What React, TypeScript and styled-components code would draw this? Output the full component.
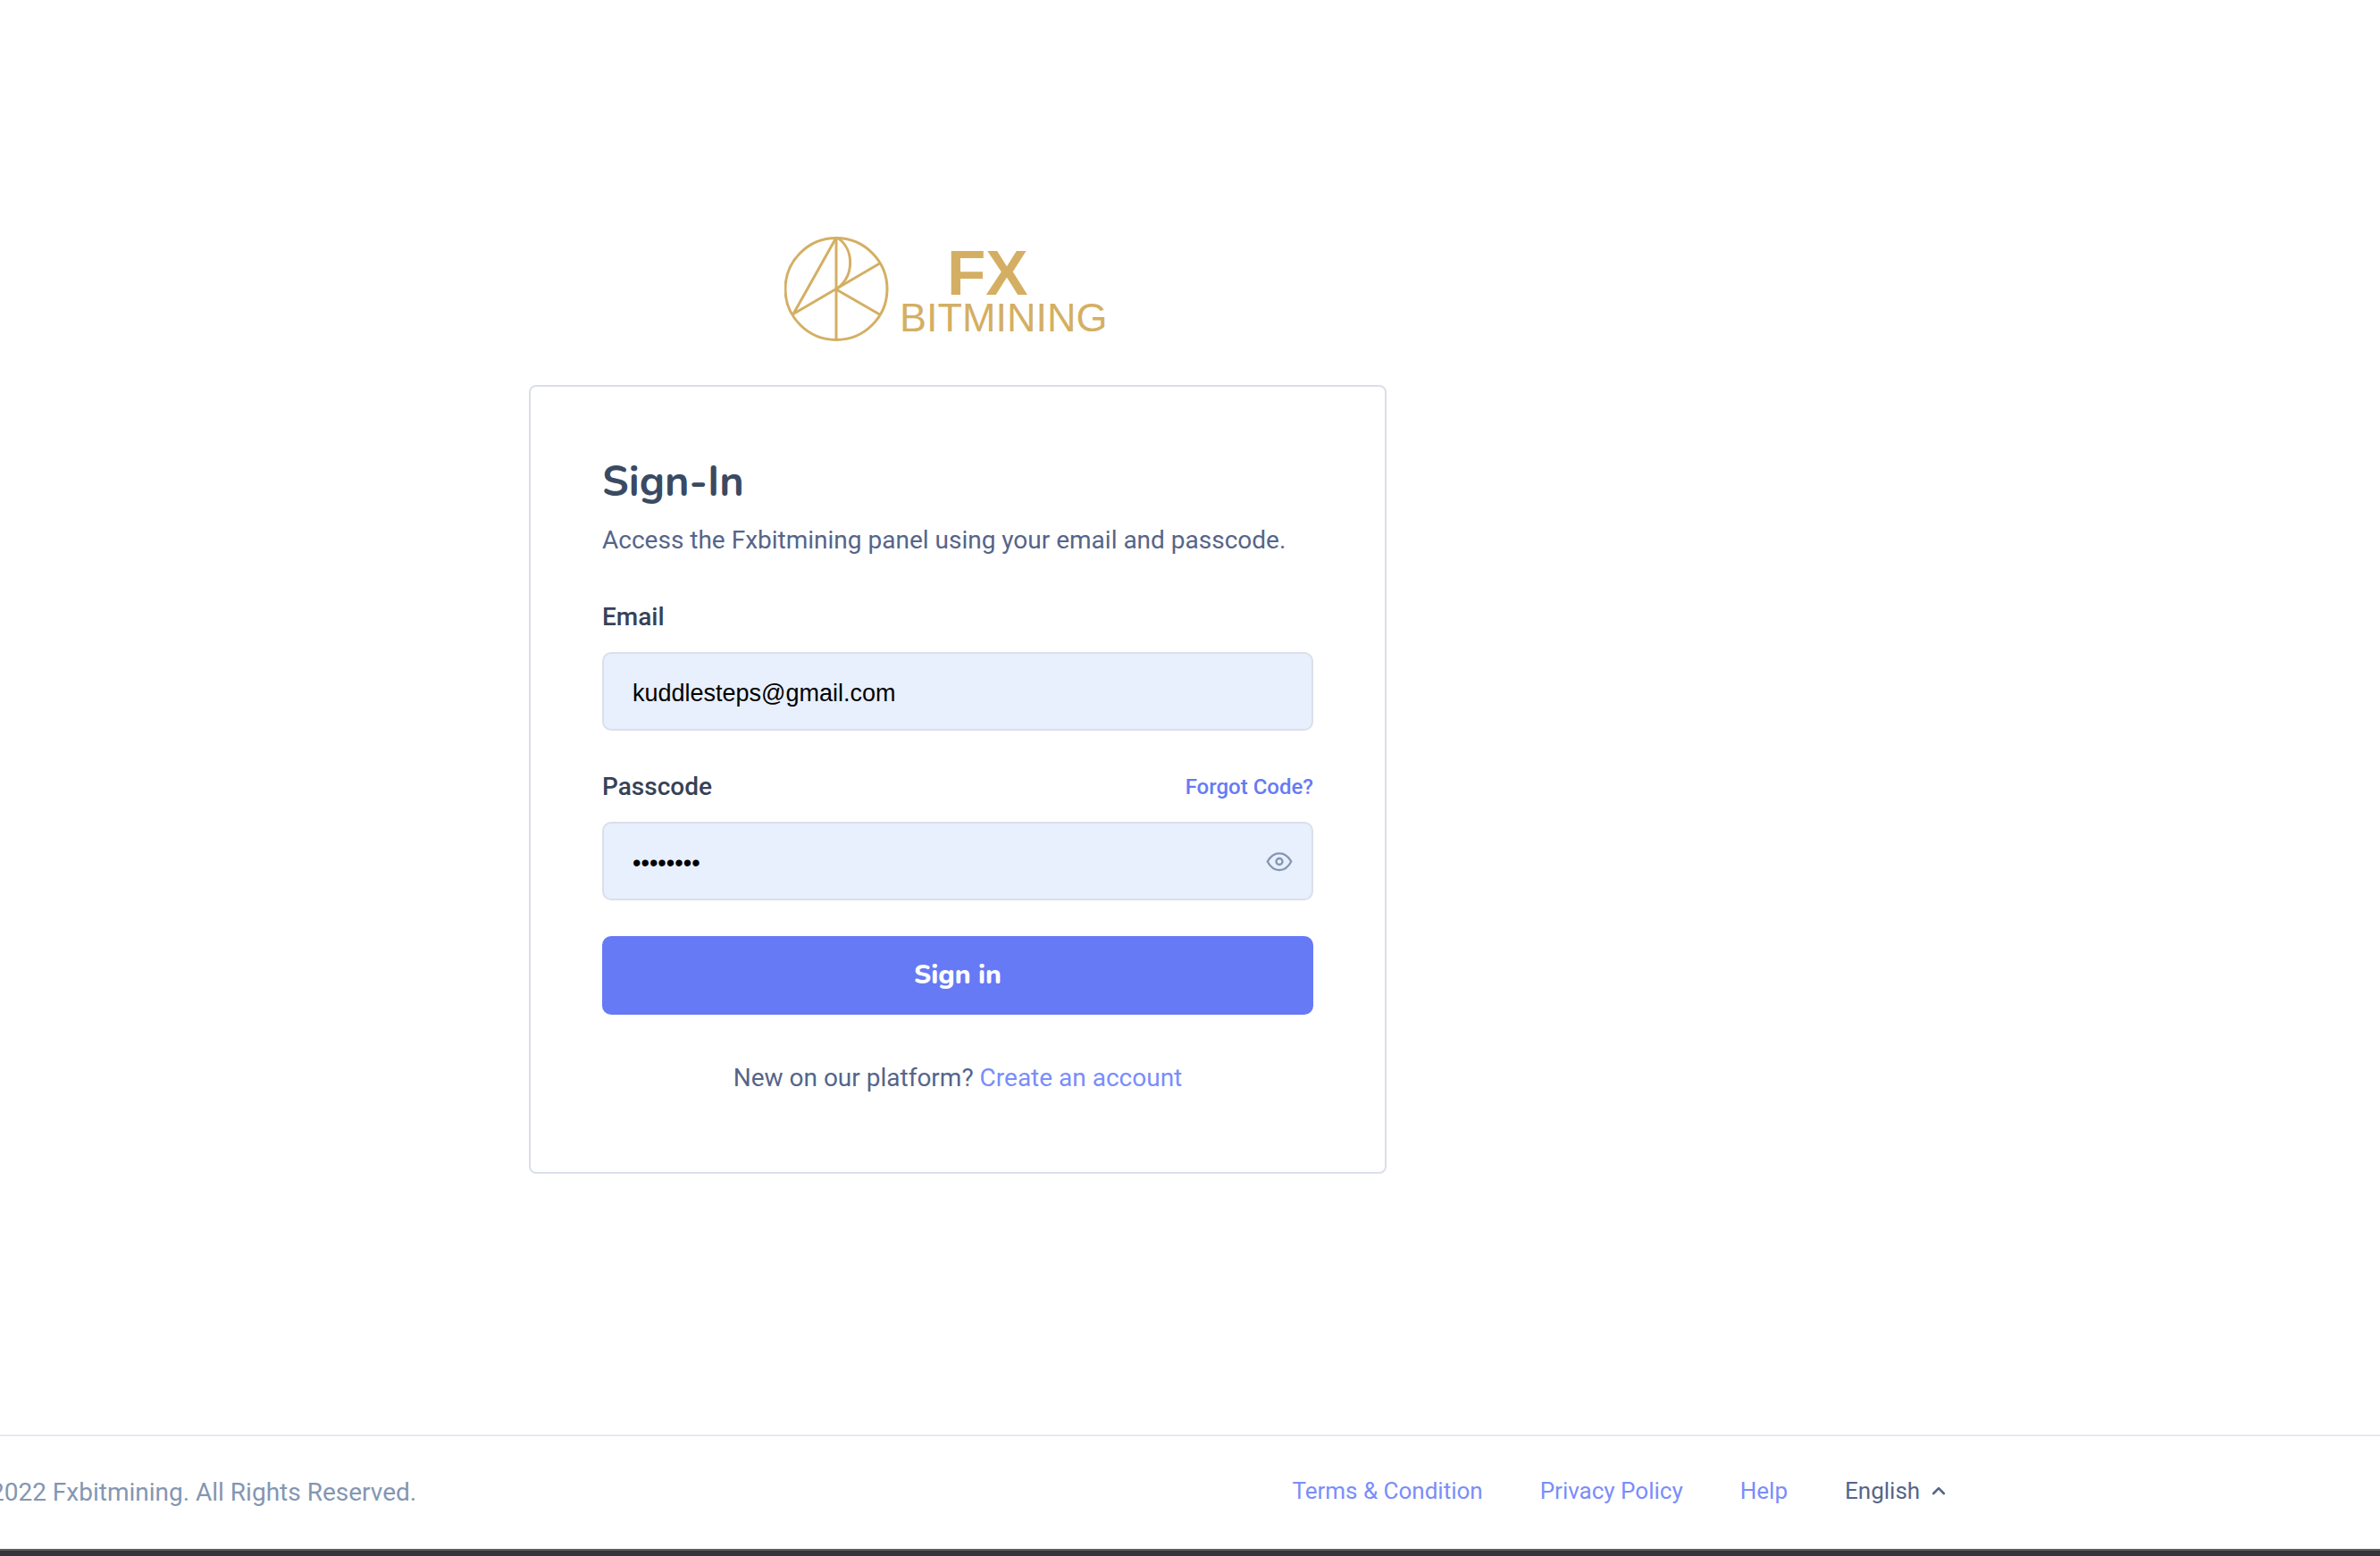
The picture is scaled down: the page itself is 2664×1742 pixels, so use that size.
import React, { useState } from 'react';
import styled, { createGlobalStyle, css } from 'styled-components';

const color = {
  heading: '#3a4a62',
  label: '#364257',
  text: '#55658a',
  muted: '#8496b1',
  primary: '#667af5',
  link: '#7a8dfb',
  border: '#dbdfea',
  line: '#e5e9f2',
  field: '#e8effd',
  gold: '#d4af63',
};

const GlobalStyle = createGlobalStyle`
  *, *::before, *::after { box-sizing: border-box; }
  body {
    margin: 0;
    background: #fff;
    color: ${color.text};
    font-family: Roboto, "Liberation Sans", sans-serif;
    font-size: 28px;
    line-height: 46px;
  }
`;

const Page = styled.div`
  display: flex;
  flex-direction: column;
  min-height: 100vh;
  overflow: hidden;
`;

const Main = styled.main`
  flex: 1;
  display: flex;
  flex-direction: column;
  align-items: center;
  padding: 264px 520px 48px 0;
`;

const Brand = styled.a`
  display: block;
  margin-bottom: 47px;
  svg { display: block; }
`;

const Card = styled.section`
  width: 100%;
  max-width: 960px;
  padding: 80px 80px 82px;
  border: 2px solid ${color.border};
  border-radius: 8px;
`;

const Title = styled.h1`
  margin: 0 0 16px;
  color: ${color.heading};
  font-family: Nunito, Lato, sans-serif;
  font-size: 47px;
  font-weight: 700;
  line-height: 53px;
`;

const Lead = styled.p`
  margin: 0 0 40px;
`;

const Form = styled.form`
  display: flex;
  flex-direction: column;
  gap: 40px;
`;

const Field = styled.div`
  display: flex;
  flex-direction: column;
  gap: 16px;
`;

const LabelRow = styled.div`
  display: flex;
  justify-content: space-between;
  align-items: center;
`;

const Label = styled.label`
  color: ${color.label};
  font-weight: 500;
`;

const Anchor = styled.a<{ $small?: boolean }>`
  color: ${color.link};
  text-decoration: none;
  ${({ $small }) => $small && css`
    color: ${color.primary};
    font-size: 24px;
    font-weight: 500;
  `}
`;

const InputWrap = styled.div`
  position: relative;
  display: flex;
`;

const Input = styled.input`
  width: 100%;
  height: 88px;
  padding: 4px 32px 0;
  border: 2px solid ${color.border};
  border-radius: 10px;
  outline: 0;
  background: ${color.field};
  color: #000;
  font-family: "Liberation Sans", Arial, sans-serif;
  font-size: 27px;
`;

const Reveal = styled.button`
  position: absolute;
  top: 0;
  right: 0;
  display: flex;
  align-items: center;
  justify-content: center;
  width: 76px;
  height: 88px;
  padding: 0;
  border: 0;
  background: none;
  color: ${color.muted};
  cursor: pointer;
`;

const Submit = styled.button`
  height: 88px;
  padding: 0 0 2px;
  border: 0;
  border-radius: 10px;
  background: ${color.primary};
  color: #fff;
  font-family: Nunito, Lato, sans-serif;
  font-size: 30px;
  font-weight: 800;
  cursor: pointer;
`;

const SignUp = styled.p`
  margin: 48px 0 0;
  text-align: center;
`;

const Footer = styled.footer`
  display: flex;
  align-items: center;
  justify-content: space-between;
  height: 128px;
  margin-left: -40px;
  padding-right: 486px;
  border-top: 2px solid ${color.line};
  color: ${color.muted};
  white-space: nowrap;
`;

const FooterNav = styled.nav`
  display: flex;
  align-items: center;
  gap: 64px;
  padding-bottom: 4px;
  font-size: 26px;
`;

const Language = styled.span`
  display: flex;
  align-items: center;
  gap: 12px;
  color: ${color.text};
`;

const LanguageSelect = styled.select`
  appearance: none;
  padding: 0;
  border: 0;
  background: none;
  color: inherit;
  font: inherit;
`;

const WindowEdge = styled.div`
  height: 8px;
  border-top: 2px solid #5f6164;
  background: #343538;
`;

function Logo() {
  return (
    <svg width="388" height="120" viewBox="0 0 388 120" fill="none" role="img" aria-label="FX Bitmining">
      <g stroke={color.gold} strokeWidth="3" strokeLinejoin="round">
        <circle cx="58" cy="59.500" r="57" />
        <path d="M58 2V117" />
        <path d="M58 2L10 87.500L106.500 31" />
        <path d="M58 60L106.500 88" />
        <path d="M59 2C78 14 79 44 59 59" />
      </g>
      <g fill={color.gold} fontFamily="'Liberation Sans', Arial, sans-serif">
        <text x="182" y="66" fontSize="71" fontWeight="700">FX</text>
        <text x="129" y="107" fontSize="45">BITMINING</text>
      </g>
    </svg>
  );
}

function EyeIcon() {
  return (
    <svg width="30" height="24" viewBox="0 0 30 24" fill="none" stroke="currentColor" strokeWidth="2.300" strokeLinejoin="round" aria-hidden="true">
      <path d="M1.700 12.500C8.500 .200 21.500 .200 28.300 12.500C21.500 25.300 8.500 25.300 1.700 12.500Z" />
      <circle cx="15" cy="12.500" r="3.500" />
    </svg>
  );
}

function CaretUp() {
  return (
    <svg width="16" height="12" viewBox="0 0 16 12" fill="none" stroke="currentColor" strokeWidth="2.600" strokeLinecap="round" strokeLinejoin="round" aria-hidden="true">
      <path d="M2.200 9L8 3.200L13.800 9" />
    </svg>
  );
}

export default function App() {
  const [email, setEmail] = useState('kuddlesteps@gmail.com');
  const [passcode, setPasscode] = useState('12345678');
  const [visible, setVisible] = useState(false);

  return (
    <>
      <GlobalStyle />
      <Page>
        <Main>
          <Brand href="#home"><Logo /></Brand>
          <Card>
            <Title>Sign-In</Title>
            <Lead>Access the Fxbitmining panel using your email and passcode.</Lead>
            <Form onSubmit={(e) => e.preventDefault()}>
              <Field>
                <LabelRow><Label htmlFor="email">Email</Label></LabelRow>
                <Input id="email" type="email" value={email} onChange={(e) => setEmail(e.target.value)} />
              </Field>
              <Field>
                <LabelRow>
                  <Label htmlFor="passcode">Passcode</Label>
                  <Anchor $small href="#forgot">Forgot Code?</Anchor>
                </LabelRow>
                <InputWrap>
                  <Input
                    id="passcode"
                    type={visible ? 'text' : 'password'}
                    value={passcode}
                    onChange={(e) => setPasscode(e.target.value)}
                  />
                  <Reveal type="button" aria-label="Show passcode" onClick={() => setVisible(!visible)}>
                    <EyeIcon />
                  </Reveal>
                </InputWrap>
              </Field>
              <Submit type="submit">Sign in</Submit>
            </Form>
            <SignUp>New on our platform? <Anchor href="#register">Create an account</Anchor></SignUp>
          </Card>
        </Main>
        <Footer>
          <span>© 2022 Fxbitmining. All Rights Reserved.</span>
          <FooterNav>
            <Anchor href="#terms">Terms &amp; Condition</Anchor>
            <Anchor href="#privacy">Privacy Policy</Anchor>
            <Anchor href="#help">Help</Anchor>
            <Language>
              <LanguageSelect aria-label="Language" defaultValue="en">
                <option value="en">English</option>
              </LanguageSelect>
              <CaretUp />
            </Language>
          </FooterNav>
        </Footer>
        <WindowEdge />
      </Page>
    </>
  );
}
